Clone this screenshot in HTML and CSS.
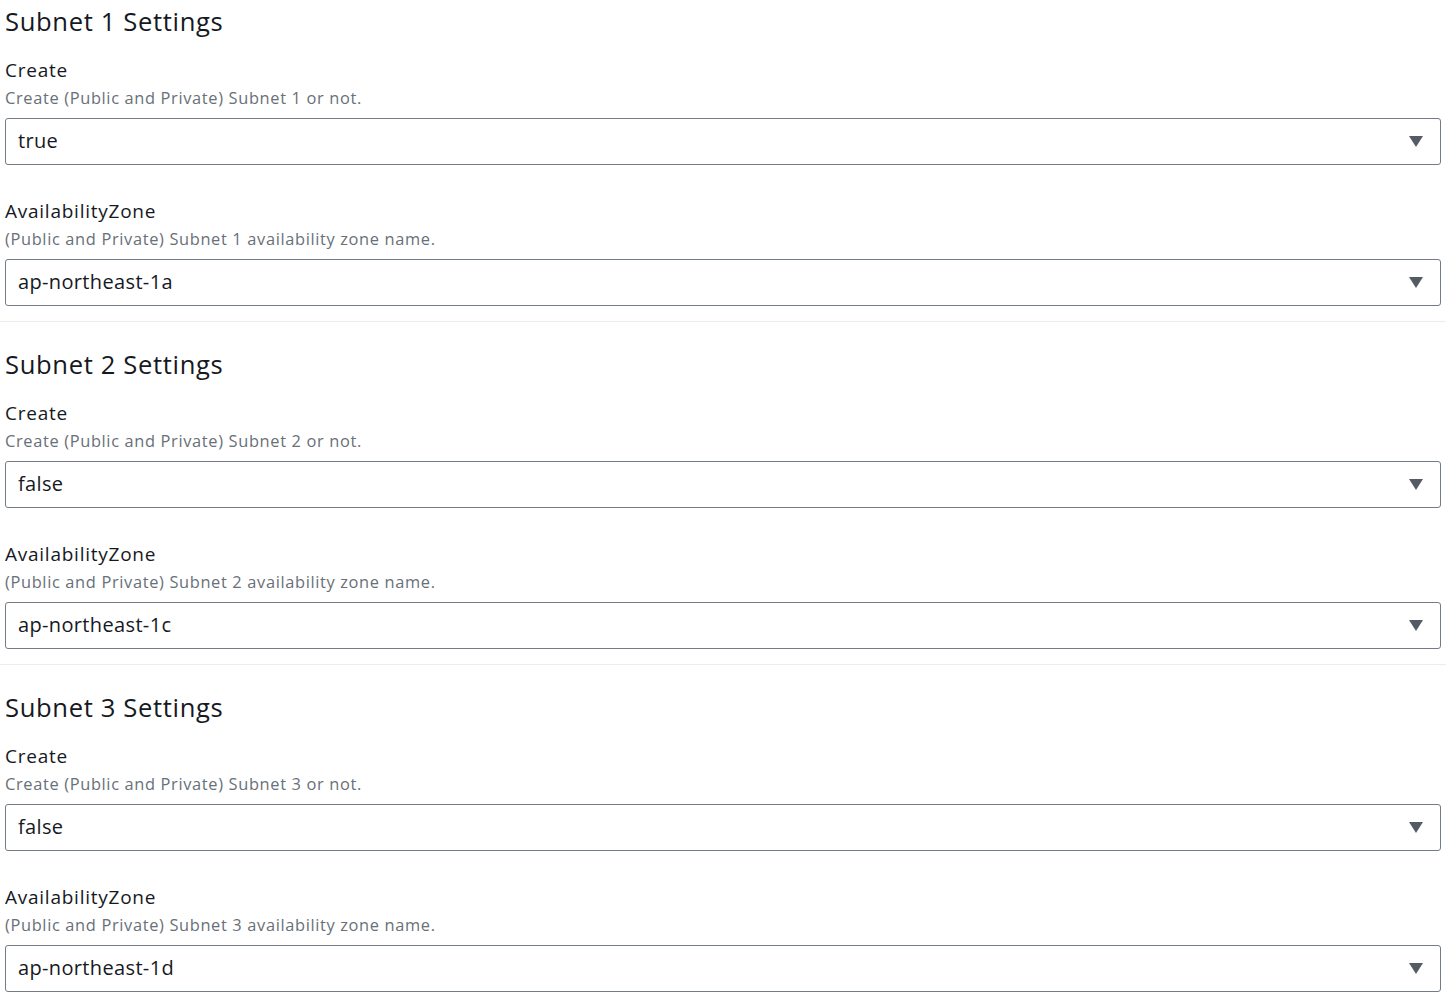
FILE: index.html
```html
<!DOCTYPE html>
<html lang="en">
<head>
<meta charset="utf-8">
<title>Subnet Settings</title>
<link rel="stylesheet" href="styles.css">
</head>
<body>
<div class="page">
  <section class="group">
    <h2 class="group-title">Subnet 1 Settings</h2>
    <div class="field">
      <div class="label">Create</div>
      <div class="desc">Create (Public and Private) Subnet 1 or not.</div>
      <div class="select"><span class="value">true</span><svg class="caret" width="14" height="11" viewBox="0 0 14 11"><path d="M0 0H14L7 11Z"/></svg></div>
    </div>
    <div class="field">
      <div class="label">AvailabilityZone</div>
      <div class="desc">(Public and Private) Subnet 1 availability zone name.</div>
      <div class="select"><span class="value">ap-northeast-1a</span><svg class="caret" width="14" height="11" viewBox="0 0 14 11"><path d="M0 0H14L7 11Z"/></svg></div>
    </div>
  </section>
  <hr class="divider">
  <section class="group">
    <h2 class="group-title">Subnet 2 Settings</h2>
    <div class="field">
      <div class="label">Create</div>
      <div class="desc">Create (Public and Private) Subnet 2 or not.</div>
      <div class="select"><span class="value">false</span><svg class="caret" width="14" height="11" viewBox="0 0 14 11"><path d="M0 0H14L7 11Z"/></svg></div>
    </div>
    <div class="field">
      <div class="label">AvailabilityZone</div>
      <div class="desc">(Public and Private) Subnet 2 availability zone name.</div>
      <div class="select"><span class="value">ap-northeast-1c</span><svg class="caret" width="14" height="11" viewBox="0 0 14 11"><path d="M0 0H14L7 11Z"/></svg></div>
    </div>
  </section>
  <hr class="divider">
  <section class="group">
    <h2 class="group-title">Subnet 3 Settings</h2>
    <div class="field">
      <div class="label">Create</div>
      <div class="desc">Create (Public and Private) Subnet 3 or not.</div>
      <div class="select"><span class="value">false</span><svg class="caret" width="14" height="11" viewBox="0 0 14 11"><path d="M0 0H14L7 11Z"/></svg></div>
    </div>
    <div class="field">
      <div class="label">AvailabilityZone</div>
      <div class="desc">(Public and Private) Subnet 3 availability zone name.</div>
      <div class="select"><span class="value">ap-northeast-1d</span><svg class="caret" width="14" height="11" viewBox="0 0 14 11"><path d="M0 0H14L7 11Z"/></svg></div>
    </div>
  </section>
</div>
</body>
</html>
```

FILE: styles.css
```css
html, body {
  margin: 0;
  padding: 0;
  background: #ffffff;
}

body {
  font-family: "Open Sans", "Noto Sans", "Liberation Sans", sans-serif;
  color: #16191f;
}

.page {
  padding: 7px 5px 0 5px;
}

.group {
  display: flex;
  flex-direction: column;
  gap: 21px;
}

.group-title {
  margin: 0;
  font-size: 25.6px;
  line-height: 30px;
  letter-spacing: 0.65px;
  font-weight: 400;
  color: #16191f;
}

.field {
  display: flex;
  flex-direction: column;
}

.field + .field {
  margin-top: 13px;
}

.label {
  font-size: 19px;
  line-height: 24px;
  letter-spacing: 0.75px;
  margin-bottom: 5px;
}

.desc {
  font-size: 16.4px;
  line-height: 22px;
  letter-spacing: 0.65px;
  color: #687078;
  margin-bottom: 9px;
}

.select {
  border: 1px solid #737b85;
  border-radius: 3px;
  display: flex;
  align-items: center;
  justify-content: space-between;
  padding: 0 17px 3px 12px;
  box-sizing: content-box;
  height: 42px;
}

.value {
  font-size: 20px;
  letter-spacing: 0.35px;
  color: #16191f;
}

.caret {
  fill: #545b64;
  display: block;
  margin-top: 3px;
}

.divider {
  border: 0;
  border-top: 1px solid #eaeded;
  margin: 15px -5px 28px -5px;
  height: 0;
}
```
